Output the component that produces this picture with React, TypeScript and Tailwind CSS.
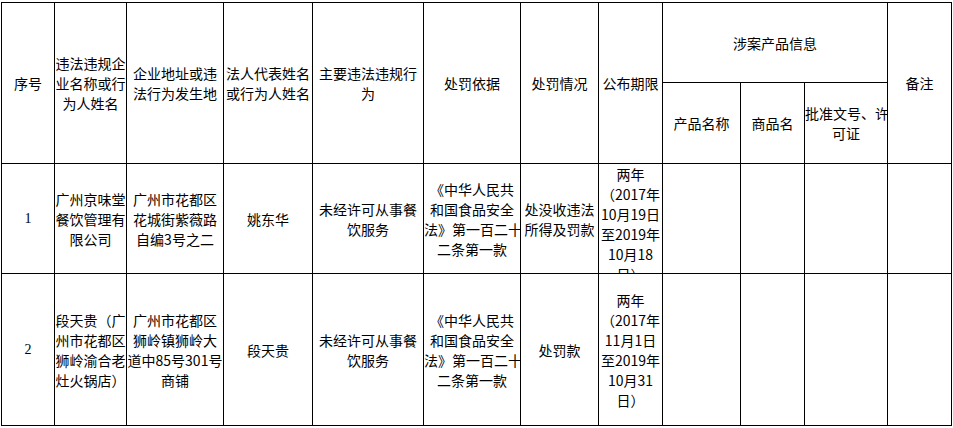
import React from "react";

const cjk = { fontFamily: '"Noto Sans CJK SC", "Noto Sans", sans-serif' };

function Lines({ lines }: { lines: string[] }) {
  return (
    <>
      {lines.map((l, i) => (
        <div key={i} className="whitespace-nowrap">
          {l}
        </div>
      ))}
    </>
  );
}

const td = "border border-black text-center align-middle p-0 overflow-hidden";

export default function App() {
  const widths = [53, 72, 97, 89, 111, 97, 78, 64, 78, 64, 83, 64];
  return (
    <div className="bg-white w-[953px] h-[428px] pl-[1px] pt-[2px]" style={cjk}>
      <table className="border-collapse table-fixed w-[951px] text-[14px] leading-[20px] text-black">
        <colgroup>
          {widths.map((w, i) => (
            <col key={i} style={{ width: w }} />
          ))}
        </colgroup>
        <tbody>
          <tr className="h-[80px]">
            <td rowSpan={2} className={td}>
              <Lines lines={["序号"]} />
            </td>
            <td rowSpan={2} className={td}>
              <Lines lines={["违法违规企", "业名称或行", "为人姓名"]} />
            </td>
            <td rowSpan={2} className={td}>
              <Lines lines={["企业地址或违", "法行为发生地"]} />
            </td>
            <td rowSpan={2} className={td}>
              <Lines lines={["法人代表姓名", "或行为人姓名"]} />
            </td>
            <td rowSpan={2} className={td}>
              <Lines lines={["主要违法违规行", "为"]} />
            </td>
            <td rowSpan={2} className={td}>
              <Lines lines={["处罚依据"]} />
            </td>
            <td rowSpan={2} className={td}>
              <Lines lines={["处罚情况"]} />
            </td>
            <td rowSpan={2} className={td}>
              <Lines lines={["公布期限"]} />
            </td>
            <td colSpan={3} className={td}>
              <Lines lines={["涉案产品信息"]} />
            </td>
            <td rowSpan={2} className={td}>
              <Lines lines={["备注"]} />
            </td>
          </tr>
          <tr className="h-[81px]">
            <td className={td}>
              <Lines lines={["产品名称"]} />
            </td>
            <td className={td}>
              <Lines lines={["商品名"]} />
            </td>
            <td className={td}>
              <Lines lines={["批准文号、许", "可证"]} />
            </td>
          </tr>
          <tr className="h-[110px]">
            <td className={td} style={{ fontFamily: '"Liberation Serif", serif' }}>
              1
            </td>
            <td className={td}>
              <Lines lines={["广州京味堂", "餐饮管理有", "限公司"]} />
            </td>
            <td className={td}>
              <Lines lines={["广州市花都区", "花城街紫薇路", "自编3号之二"]} />
            </td>
            <td className={td}>
              <Lines lines={["姚东华"]} />
            </td>
            <td className={td}>
              <Lines lines={["未经许可从事餐", "饮服务"]} />
            </td>
            <td className={td}>
              <Lines lines={["《中华人民共", "和国食品安全", "法》第一百二十", "二条第一款"]} />
            </td>
            <td className={td}>
              <Lines lines={["处没收违法", "所得及罚款"]} />
            </td>
            <td className={td + " align-top"}>
              <div className="h-[109px] overflow-hidden">
                <Lines lines={["两年", "（2017年", "10月19日", "至2019年", "10月18", "日）"]} />
              </div>
            </td>
            <td className={td}></td>
            <td className={td}></td>
            <td className={td}></td>
            <td className={td}></td>
          </tr>
          <tr className="h-[152px]">
            <td className={td} style={{ fontFamily: '"Liberation Serif", serif' }}>
              2
            </td>
            <td className={td}>
              <Lines lines={["段天贵（广", "州市花都区", "狮岭渝合老", "灶火锅店）"]} />
            </td>
            <td className={td}>
              <Lines lines={["广州市花都区", "狮岭镇狮岭大", "道中85号301号", "商铺"]} />
            </td>
            <td className={td}>
              <Lines lines={["段天贵"]} />
            </td>
            <td className={td}>
              <Lines lines={["未经许可从事餐", "饮服务"]} />
            </td>
            <td className={td}>
              <Lines lines={["《中华人民共", "和国食品安全", "法》第一百二十", "二条第一款"]} />
            </td>
            <td className={td}>
              <Lines lines={["处罚款"]} />
            </td>
            <td className={td}>
              <Lines lines={["两年", "（2017年", "11月1日", "至2019年", "10月31", "日）"]} />
            </td>
            <td className={td}></td>
            <td className={td}></td>
            <td className={td}></td>
            <td className={td}></td>
          </tr>
        </tbody>
      </table>
    </div>
  );
}
